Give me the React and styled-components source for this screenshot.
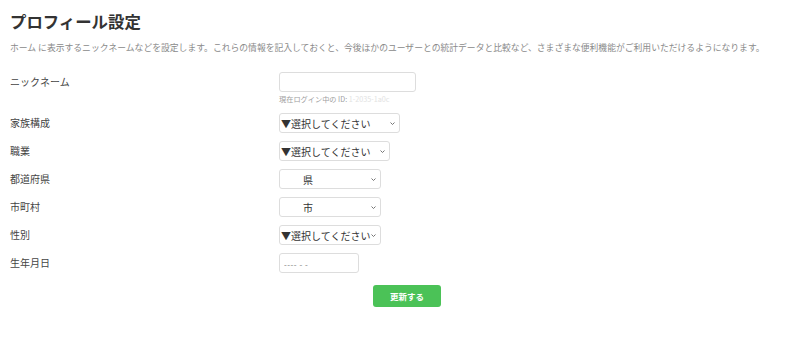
import React from "react";
import styled, {createGlobalStyle} from 'styled-components';

const GlobalStyle = createGlobalStyle`
  body {
    margin: 0;
    background: #ffffff;
    font-family: "Noto Sans CJK JP", "Noto Sans", sans-serif;
    color: #333333;
  }
`

const Page = styled.main`
  padding: 9px 0 0 10px;
`

const Title = styled.h1`
  margin: 0;
  font-size: 16.4px;
  line-height: 24px;
  font-weight: 700;
  color: #333333;
`

const Lead = styled.p`
  margin: 9px 0 0;
  font-size: 8.8px;
  line-height: 12px;
  color: #8a8a8a;
  white-space: nowrap;
`

const Form = styled.form`
  display: flex;
  flex-direction: column;
  gap: 8px;
  margin-top: 18px;
`

const Row = styled.div`
  display: grid;
  grid-template-columns: 269px 1fr;
  align-items: start;
  margin-bottom: ${p => p.$extra || 0}px;
`

const Label = styled.label`
  font-size: 10px;
  line-height: 20px;
  color: #444444;
`

const Field = styled.div`
  display: flex;
  flex-direction: column;
  align-items: flex-start;
`

const TextInput = styled.input`
  display: block;
  box-sizing: border-box;
  width: ${p => p.$w}px;
  height: 20px;
  border: 1px solid #dddddd;
  border-radius: 3px;
  background: #fff;
  padding: 2px 4px 0;
  font-family: "Noto Sans CJK JP", sans-serif;
  font-size: 8px;
  color: #555;
  outline: none;

  &::placeholder {
    color: #777777;
    letter-spacing: 0.5px;
  }
`

const Hint = styled.div`
  margin-top: 2px;
  font-size: 7.2px;
  line-height: 10px;
  color: #a0a0a0;

  span {
    color: #e2e2e2;
  }
`

const SelectWrap = styled.div`
  position: relative;
  display: flex;
  align-items: center;
  width: ${p => p.$w}px;
  height: 20px;

  svg {
    position: absolute;
    right: 5px;
    top: 9px;
    pointer-events: none;
  }
`

const Select = styled.select`
  appearance: none;
  display: block;
  box-sizing: border-box;
  width: 100%;
  height: 20px;
  border: 1px solid #dddddd;
  border-radius: 3px;
  background: #fff;
  padding: 0 0 0 ${p => p.$indent || 1}px;
  font-family: "Noto Sans CJK JP", sans-serif;
  font-size: 10px;
  color: #333333;
  outline: none;
`

const Actions = styled.div`
  display: flex;
  justify-content: center;
  padding-left: 4px;
  margin-top: 4px;
`

const Submit = styled.button`
  width: 68px;
  height: 22px;
  border: none;
  border-radius: 3px;
  background: #4bc257;
  color: #ffffff;
  font-family: "Noto Sans CJK JP", sans-serif;
  font-size: 8.5px;
  font-weight: 700;
  cursor: pointer;
`

const Chevron = () => (
    <svg width="5" height="3" viewBox="0 0 5 3">
        <path d="M0.5 0.5 L2.5 2.5 L4.5 0.5" fill="none" stroke="#666" strokeWidth="0.9"/>
    </svg>
)

const Dropdown = ({w, text, indent}) => (
    <SelectWrap $w={w}>
        <Select defaultValue="" $indent={indent}>
            <option value="">{text}</option>
        </Select>
        <Chevron/>
    </SelectWrap>
)

const App = () => {
    return (
        <Page>
            <GlobalStyle/>
            <Title>プロフィール設定</Title>
            <Lead>ホーム に表示するニックネームなどを設定します。これらの情報を記入しておくと、今後ほかのユーザーとの統計データと比較など、さまざまな便利機能がご利用いただけるようになります。</Lead>
            <Form onSubmit={e => e.preventDefault()}>
                <Row $extra={1}>
                    <Label>ニックネーム</Label>
                    <Field>
                        <TextInput $w={137}/>
                        <Hint>現在ログイン中の ID: <span>1-2035-1a0c</span></Hint>
                    </Field>
                </Row>
                <Row>
                    <Label>家族構成</Label>
                    <Dropdown w={121} text="▼選択してください"/>
                </Row>
                <Row>
                    <Label>職業</Label>
                    <Dropdown w={111} text="▼選択してください"/>
                </Row>
                <Row>
                    <Label>都道府県</Label>
                    <Dropdown w={102} text="県" indent={23}/>
                </Row>
                <Row>
                    <Label>市町村</Label>
                    <Dropdown w={102} text="市" indent={23}/>
                </Row>
                <Row>
                    <Label>性別</Label>
                    <Dropdown w={102} text="▼選択してください"/>
                </Row>
                <Row>
                    <Label>生年月日</Label>
                    <TextInput $w={80} placeholder="---- - -"/>
                </Row>
                <Actions>
                    <Submit type="submit">更新する</Submit>
                </Actions>
            </Form>
        </Page>
    )
}

export default App;
